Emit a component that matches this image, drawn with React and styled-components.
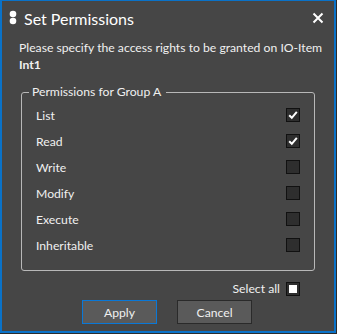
import React from "react";
import styled, { createGlobalStyle } from "styled-components";

const GlobalStyle = createGlobalStyle`
  html, body {
    margin: 0;
    padding: 0;
    background: #2b2b2b;
  }
  body {
    font-family: Lato, "Noto Sans", sans-serif;
  }
`;

const PERMISSIONS = [
  { label: "List", checked: true },
  { label: "Read", checked: true },
  { label: "Write", checked: false },
  { label: "Modify", checked: false },
  { label: "Execute", checked: false },
  { label: "Inheritable", checked: false },
];

const DotsIcon = () => (
  <svg width="8" height="16" viewBox="0 0 8 16">
    <circle cx="4" cy="4" r="3.3" fill="#fff" />
    <circle cx="4" cy="11" r="3.3" fill="#fff" />
  </svg>
);

const CloseIcon = () => (
  <svg width="12" height="12" viewBox="0 0 12 12">
    <path d="M1.5 1.5 L10.5 10.5 M10.5 1.5 L1.5 10.5" stroke="#fff" strokeWidth="2" />
  </svg>
);

const CheckIcon = () => (
  <svg width="10" height="10" viewBox="0 0 10 10">
    <path d="M1.2 5.2 L3.8 7.8 L8.8 1.8" stroke="#fff" strokeWidth="2" fill="none" />
  </svg>
);

const Checkbox = ({ checked, filled }) => (
  <Box>
    {checked && <CheckIcon />}
    {filled && <Fill />}
  </Box>
);

const App = () => {
  return (
    <>
      <GlobalStyle />
      <Dialog>
        <TitleBar>
          <DotsIcon />
          <Title>Set Permissions</Title>
          <Close>
            <CloseIcon />
          </Close>
        </TitleBar>
        <Body>
          <Description>
            Please specify the access rights to be granted on IO-Item
            <strong>Int1</strong>
          </Description>
          <Group>
            <Legend>Permissions for Group A</Legend>
            {PERMISSIONS.map((p) => (
              <Row key={p.label}>
                <span>{p.label}</span>
                <Checkbox checked={p.checked} />
              </Row>
            ))}
          </Group>
          <SelectAll>
            <span>Select all</span>
            <Checkbox filled />
          </SelectAll>
          <Buttons>
            <Button $primary>Apply</Button>
            <Button>Cancel</Button>
          </Buttons>
        </Body>
      </Dialog>
    </>
  );
};

const Dialog = styled.div`
  box-sizing: border-box;
  width: 336px;
  height: 333px;
  border: 2px solid #0a72c8;
  border-top-width: 1px;
  background: #464646;
  color: #f0f0f0;
  display: flex;
  flex-direction: column;
  font-size: 12.2px;
`;

const TitleBar = styled.div`
  height: 34px;
  display: flex;
  align-items: center;
  padding: 0 10px 1px 7px;
  gap: 7px;
`;

const Title = styled.div`
  flex: 1;
  font-size: 16px;
  color: #fff;
`;

const Close = styled.button`
  border: 0;
  padding: 0;
  background: transparent;
  display: flex;
  cursor: pointer;
`;

const Body = styled.div`
  padding: 3px 19px 0 17px;
  display: flex;
  flex-direction: column;
`;

const Description = styled.p`
  margin: 0;
  line-height: 17px;
  white-space: nowrap;

  strong {
    display: block;
    font-weight: 700;
  }
`;

const Group = styled.fieldset`
  margin: 11px 0 0 2px;
  padding: 2px 14px 12px 14px;
  border: 1px solid #b8b8b8;
  border-radius: 3px;
`;

const Legend = styled.legend`
  padding: 0 5px 0 3px;
  margin-left: -7px;
  line-height: 16px;
`;

const Row = styled.div`
  height: 26px;
  display: flex;
  align-items: center;
  justify-content: space-between;
`;

const Box = styled.span`
  box-sizing: border-box;
  width: 14px;
  height: 14px;
  border: 1px solid #111;
  background: #2e2e2e;
  display: flex;
  align-items: center;
  justify-content: center;
`;

const Fill = styled.span`
  width: 8px;
  height: 8px;
  background: #fff;
`;

const SelectAll = styled.div`
  margin: 10px 15px 0 0;
  display: flex;
  justify-content: flex-end;
  align-items: center;
  gap: 6px;
`;

const Buttons = styled.div`
  margin-top: 4px;
  display: flex;
  justify-content: center;
  gap: 20px;
`;

const Button = styled.button`
  width: 75px;
  height: 24px;
  background: #5a5a5a;
  color: #f0f0f0;
  border: 1px solid ${(p) => (p.$primary ? "#0a78d7" : "#2a2a2a")};
  font-family: inherit;
  font-size: 12.2px;
  padding: 0;
  cursor: pointer;
`;

export default App;
